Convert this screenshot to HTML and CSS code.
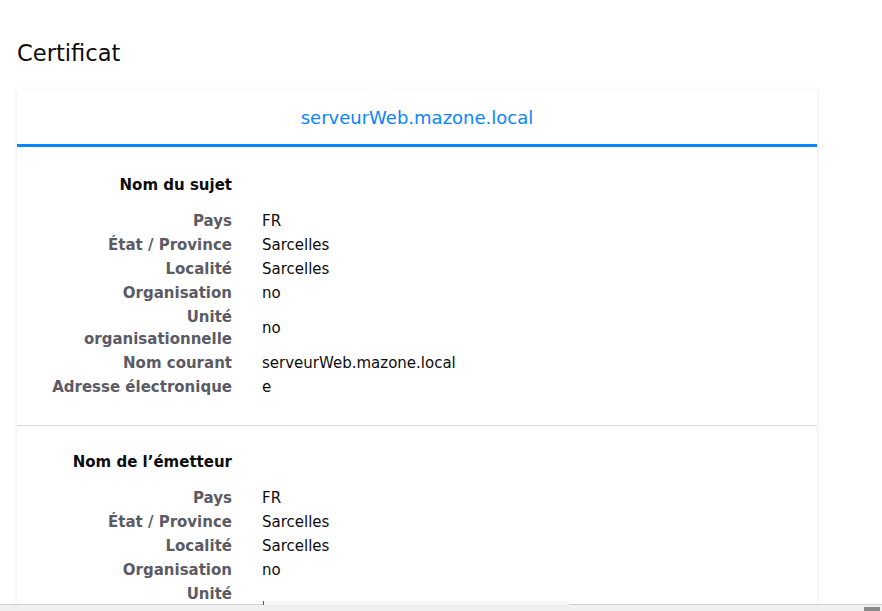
FILE: index.html
```html
<!DOCTYPE html>
<html lang="fr">
<head>
<meta charset="utf-8">
<title>Certificat</title>
<link rel="stylesheet" href="styles.css">
</head>
<body>
<main class="page">
  <h1 class="title">Certificat</h1>
  <section class="card">
    <div class="tabs">
      <span class="tab">serveurWeb.mazone.local</span>
    </div>
    <div class="group">
      <div class="group-title">Nom du sujet</div>
      <div class="rows">
        <div class="label">Pays</div><div class="value">FR</div>
        <div class="label">État / Province</div><div class="value">Sarcelles</div>
        <div class="label">Localité</div><div class="value">Sarcelles</div>
        <div class="label">Organisation</div><div class="value">no</div>
        <div class="label">Unité organisationnelle</div><div class="value">no</div>
        <div class="label">Nom courant</div><div class="value">serveurWeb.mazone.local</div>
        <div class="label">Adresse électronique</div><div class="value">e</div>
      </div>
    </div>
    <div class="group">
      <div class="group-title">Nom de l’émetteur</div>
      <div class="rows">
        <div class="label">Pays</div><div class="value">FR</div>
        <div class="label">État / Province</div><div class="value">Sarcelles</div>
        <div class="label">Localité</div><div class="value">Sarcelles</div>
        <div class="label">Organisation</div><div class="value">no</div>
        <div class="label">Unité organisationnelle</div><div class="value">no</div>
        <div class="label">Nom courant</div><div class="value">serveurWeb.mazone.local</div>
        <div class="label">Adresse électronique</div><div class="value">e</div>
      </div>
    </div>
  </section>
</main>
<div class="statusbar"><span class="status-tip"></span><span class="status-grip"></span></div>
</body>
</html>
```

FILE: styles.css
```css
html, body {
  margin: 0;
  padding: 0;
  background: #ffffff;
  overflow: hidden;
  height: 100%;
}
body {
  font-family: "DejaVu Sans", "Noto Sans", sans-serif;
  font-size: 15px;
  color: #0c0c0d;
}
.page {
  padding: 0 17px;
}
.title {
  margin: 0;
  padding-top: 38px;
  font-size: 22.6px;
  font-weight: normal;
  line-height: 30px;
  height: 51px;
}
.card {
  width: 800px;
  background: #fff;
  box-shadow: 0 1px 4px rgba(12, 12, 13, 0.1);
}
.tabs {
  display: flex;
  justify-content: center;
  border-bottom: 3px solid #0a84ff;
  height: 55px;
  align-items: center;
}
.tab {
  color: #0a84ff;
  font-size: 18px;
  padding-top: 1px;
}
.group {
  padding: 27px 0 27px 35px;
  border-bottom: 1px solid #d7d7db;
}
.group + .group {
  padding-top: 25px;
}
.group-title {
  width: 180px;
  text-align: right;
  font-weight: bold;
  line-height: 22px;
  margin-bottom: 14px;
}
.rows {
  display: grid;
  grid-template-columns: 180px auto;
  column-gap: 30px;
  row-gap: 2px;
  align-items: center;
}
.label {
  text-align: right;
  font-weight: bold;
  color: #5b5b66;
  line-height: 22px;
}
.value {
  line-height: 22px;
}
.statusbar {
  position: fixed;
  left: 0;
  right: 0;
  bottom: 0;
  height: 6px;
  background: #f0f0f0;
  border-top: 1px solid #cfcfcf;
}
.status-tip {
  position: absolute;
  left: 263px;
  top: -4px;
  width: 305px;
  height: 4px;
  background: #f5f5f5;
  border-left: 1px solid #555;
}
.status-grip {
  position: absolute;
  right: 2px;
  bottom: 0;
  width: 16px;
  height: 4px;
  background: #8a8a8a;
}
```
